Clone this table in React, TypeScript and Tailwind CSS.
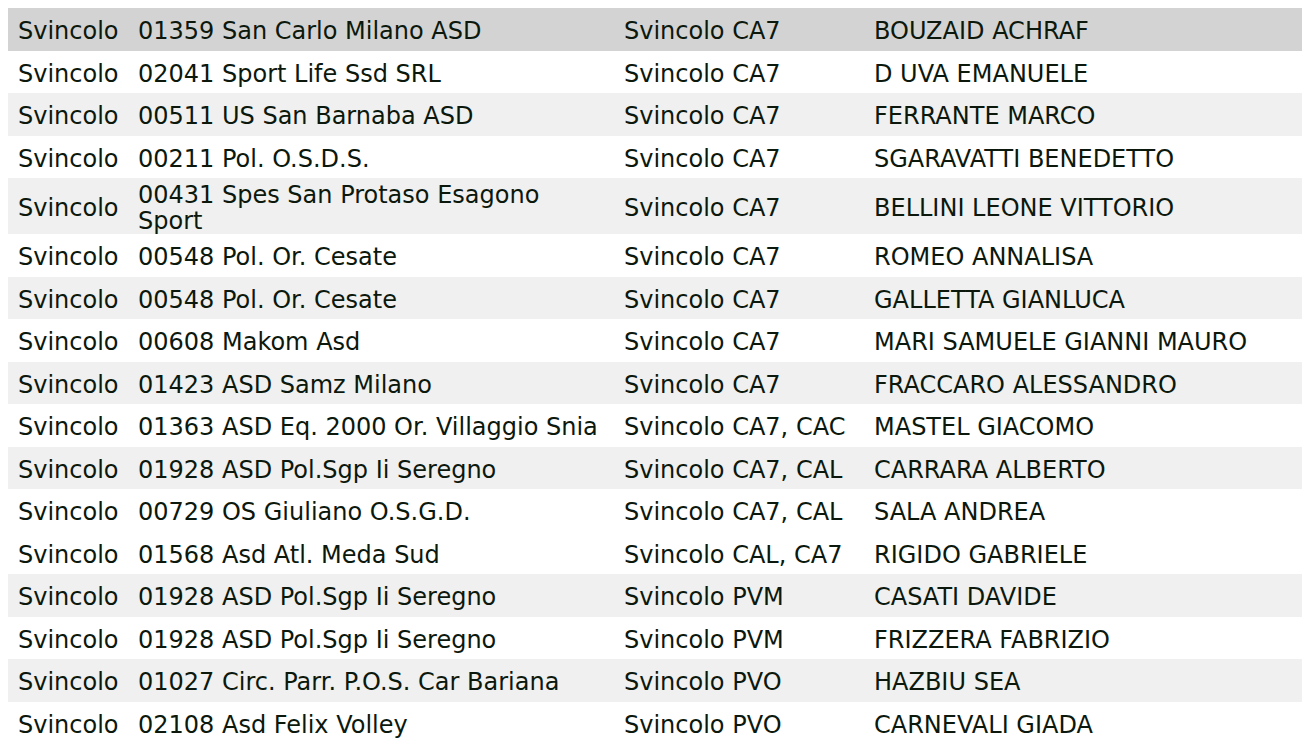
import React from "react";

const rows: [string, string, string, string][] = [
  ["Svincolo", "01359 San Carlo Milano ASD", "Svincolo CA7", "BOUZAID ACHRAF"],
  ["Svincolo", "02041 Sport Life Ssd SRL", "Svincolo CA7", "D UVA EMANUELE"],
  ["Svincolo", "00511 US San Barnaba ASD", "Svincolo CA7", "FERRANTE MARCO"],
  ["Svincolo", "00211 Pol. O.S.D.S.", "Svincolo CA7", "SGARAVATTI BENEDETTO"],
  ["Svincolo", "00431 Spes San Protaso Esagono Sport", "Svincolo CA7", "BELLINI LEONE VITTORIO"],
  ["Svincolo", "00548 Pol. Or. Cesate", "Svincolo CA7", "ROMEO ANNALISA"],
  ["Svincolo", "00548 Pol. Or. Cesate", "Svincolo CA7", "GALLETTA GIANLUCA"],
  ["Svincolo", "00608 Makom Asd", "Svincolo CA7", "MARI SAMUELE GIANNI MAURO"],
  ["Svincolo", "01423 ASD Samz Milano", "Svincolo CA7", "FRACCARO ALESSANDRO"],
  ["Svincolo", "01363 ASD Eq. 2000 Or. Villaggio Snia", "Svincolo CA7, CAC", "MASTEL GIACOMO"],
  ["Svincolo", "01928 ASD Pol.Sgp Ii Seregno", "Svincolo CA7, CAL", "CARRARA ALBERTO"],
  ["Svincolo", "00729 OS Giuliano O.S.G.D.", "Svincolo CA7, CAL", "SALA ANDREA"],
  ["Svincolo", "01568 Asd Atl. Meda Sud", "Svincolo CAL, CA7", "RIGIDO GABRIELE"],
  ["Svincolo", "01928 ASD Pol.Sgp Ii Seregno", "Svincolo PVM", "CASATI DAVIDE"],
  ["Svincolo", "01928 ASD Pol.Sgp Ii Seregno", "Svincolo PVM", "FRIZZERA FABRIZIO"],
  ["Svincolo", "01027 Circ. Parr. P.O.S. Car Bariana", "Svincolo PVO", "HAZBIU SEA"],
  ["Svincolo", "02108 Asd Felix Volley", "Svincolo PVO", "CARNEVALI GIADA"],
];

const grayRows = new Set([2, 4, 6, 8, 10, 13, 15]);

export default function App() {
  return (
    <div className="bg-white p-2 w-[1308px] h-[756px] overflow-hidden">
      <table
        className="table-fixed border-collapse w-[1294px] text-[24px] leading-[26px] text-[#0c180c]"
        style={{ fontFamily: '"DejaVu Sans", Verdana, sans-serif' }}
      >
        <colgroup>
          <col className="w-[120px]" />
          <col className="w-[486px]" />
          <col className="w-[250px]" />
          <col className="w-[438px]" />
        </colgroup>
        <tbody>
          {rows.map((r, i) => (
            <tr
              key={i}
              className={
                "h-[42.5px] " +
                (i === 0 ? "bg-[#d3d3d3]" : grayRows.has(i) ? "bg-[#f0f0f0]" : "bg-white")
              }
            >
              <td className="pl-[10px] pt-[4px] pb-0 align-middle">{r[0]}</td>
              <td className="pl-[10px] pr-[12px] pt-[4px] pb-0 align-middle">{r[1]}</td>
              <td className="pl-[10px] pt-[4px] pb-0 align-middle whitespace-nowrap">{r[2]}</td>
              <td className="pl-[10px] pt-[4px] pb-0 align-middle whitespace-nowrap">{r[3]}</td>
            </tr>
          ))}
        </tbody>
      </table>
    </div>
  );
}
